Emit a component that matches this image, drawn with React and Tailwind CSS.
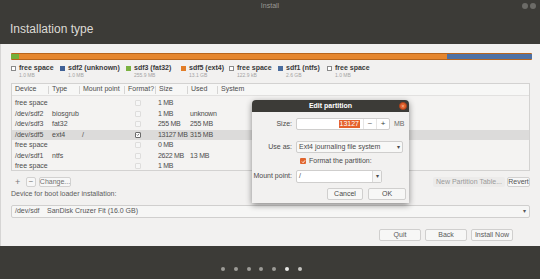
import React from "react";

const legend = [
  { w: "w-[49px]", sw: "free", label: "free space", size: "1.0 MB" },
  { w: "w-[66px]", sw: "bg-[#3f6096]", label: "sdf2 (unknown)", size: "1.0 MB" },
  { w: "w-[55px]", sw: "bg-[#7bb241]", label: "sdf3 (fat32)", size: "255.9 MB" },
  { w: "w-[48px]", sw: "bg-[#e27d27]", label: "sdf5 (ext4)", size: "13.1 GB" },
  { w: "w-[49px]", sw: "free", label: "free space", size: "122.9 kB" },
  { w: "w-[49px]", sw: "bg-[#4a6d9f]", label: "sdf1 (ntfs)", size: "2.6 GB" },
  { w: "w-[49px]", sw: "free", label: "free space", size: "1.0 MB" },
];

const rows = [
  ["free space", "", "", false, "1 MB", ""],
  ["/dev/sdf2", "biosgrub", "", false, "1 MB", "unknown"],
  ["/dev/sdf3", "fat32", "", false, "255 MB", "255 MB"],
  ["/dev/sdf5", "ext4", "/", true, "13127 MB", "315 MB"],
  ["free space", "", "", false, "0 MB", ""],
  ["/dev/sdf1", "ntfs", "", false, "2622 MB", "13 MB"],
  ["free space", "", "", false, "1 MB", ""],
];

const grid = "grid grid-cols-[36px_31px_45px_31px_32px_30px_1fr]";

function Check({ on }) {
  if (on)
    return (
      <span className="w-[6px] h-[6px] ml-[11px] border border-[#6b6b6b] rounded-[1px] bg-white flex items-center justify-center">
        <svg width="5" height="5" viewBox="0 0 10 10">
          <path d="M2 5.2 L4.2 7.4 L8 2.8" stroke="#4a4a4a" strokeWidth="1.8" fill="none" />
        </svg>
      </span>
    );
  return <span className="w-[6px] h-[6px] ml-[11px] border border-[#dedddc] rounded-[1px] bg-[#f6f6f6]" />;
}

export default function App() {
  return (
    <div className="w-[540px] h-[279px] overflow-hidden relative bg-[#3c3b37] font-['Liberation_Sans',Arial,sans-serif]">
      {/* header */}
      <div className="h-[44px] relative">
        <div className="h-[13px] flex items-center justify-center text-[7px] text-[#9a9994]">Install</div>
        <div className="absolute top-[3px] right-[4px] flex gap-[2px]">
          <span className="w-[6px] h-[6px] rounded-full bg-[#6c6b67]" />
          <span className="w-[6px] h-[6px] rounded-full bg-[#6c6b67]" />
        </div>
        <div className="pl-[10px] pt-[8px] text-[12px] leading-[16px] text-[#dcdad5]">Installation type</div>
      </div>

      {/* main panel */}
      <div className="h-[202px] bg-[#f2f1f0] pl-[10px] pr-[10px] pt-[9px] flex flex-col border-l border-[#d6d5d4]">
        {/* partition bar */}
        <div className="flex h-[7px] w-[521px] rounded-[1px] overflow-hidden border-y border-[#b8651c]">
          <div className="w-[8px] bg-[#74b03a]" />
          <div className="w-[428px] bg-[#e5862e]" />
          <div className="flex-1 bg-[#4f71a3]" />
        </div>

        {/* legend */}
        <div className="flex mt-[4px] h-[15px]">
          {legend.map((l, i) => (
            <div key={i} className={`${l.w} flex items-start`}>
              {l.sw === "free" ? (
                <span className="w-[5px] h-[5px] mt-[2px] border border-[#8a8a8a] bg-white shrink-0" />
              ) : (
                <span className={`w-[5px] h-[5px] mt-[2px] ${l.sw} shrink-0`} />
              )}
              <div className="ml-[3px] flex flex-col">
                <span className="text-[7px] leading-[8px] text-[#3a3a3a] font-bold whitespace-nowrap">{l.label}</span>
                <span className="text-[5px] leading-[7px] text-[#a3a3a3] whitespace-nowrap">{l.size}</span>
              </div>
            </div>
          ))}
        </div>

        {/* table */}
        <div className="mt-[4px] h-[88px] border border-[#d3d2d1] bg-[#f4f3f2] text-[7px] text-[#4c4c4c]">
          <div className={`${grid} h-[12px] items-center border-b border-[#e2e1e0] bg-[#f7f7f6]`}>
            {["Device", "Type", "Mount point", "Format?", "Size", "Used", "System"].map((h, i) => (
              <div key={h} className="flex items-center h-full">
                {i > 0 && <span className="w-px h-[8px] bg-[#d6d5d4]" />}
                <span className="pl-[3px] whitespace-nowrap">{h}</span>
              </div>
            ))}
          </div>
          <div className="pt-[2px]">
            {rows.map((r, i) => (
              <div key={i} className={`${grid} h-[10.5px] items-center ${r[3] ? "bg-[#dcdbda]" : ""}`}>
                <span className="pl-[3px] whitespace-nowrap">{r[0]}</span>
                <span className="pl-[4px]">{r[1]}</span>
                <span className="pl-[3px]">{r[2]}</span>
                <span className="flex items-center">
                  <Check on={r[3]} />
                </span>
                <span className="pl-[3px] whitespace-nowrap tracking-[-0.3px]">{r[4]}</span>
                <span className="pl-[3px] whitespace-nowrap tracking-[-0.2px]">{r[5]}</span>
                <span />
              </div>
            ))}
          </div>
        </div>

        {/* +/- change row */}
        <div className="mt-[6px] h-[10px] flex items-center text-[7px] text-[#6f6f6f]">
          <span className="ml-[4px] w-[6px] text-[9px] leading-[10px] text-[#7a7a7a]">+</span>
          <span className="ml-[5px] w-[10px] h-[10px] border border-[#d2d1d0] rounded-[2px] bg-[#f7f7f7] flex items-center justify-center text-[8px] text-[#7a7a7a]">−</span>
          <span className="ml-[3px] w-[32px] h-[10px] border border-[#d2d1d0] rounded-[2px] bg-[#f7f7f7] flex items-center justify-center">Change...</span>
          <span className="ml-auto w-[72px] h-[10px] bg-[#ecebea] rounded-[2px] flex items-center justify-center text-[#9a9a9a] whitespace-nowrap">New Partition Table...</span>
          <span className="ml-[2px] w-[23px] h-[10px] border border-[#d2d1d0] rounded-[2px] bg-[#f7f7f7] flex items-center justify-center text-[#555]">Revert</span>
        </div>

        {/* boot loader */}
        <div className="mt-[3px] h-[8px] text-[7px] leading-[8px] text-[#5c5c5c]">Device for boot loader installation:</div>
        <div className="mt-[7px] h-[13px] border border-[#d0cfce] rounded-[2px] bg-[#f6f6f5] flex items-center text-[7px] text-[#555]">
          <span className="pl-[3px] w-[35px]">/dev/sdf</span>
          <span>SanDisk Cruzer Fit (16.0 GB)</span>
          <span className="ml-auto mr-[3px] text-[6px] text-[#555]">▾</span>
        </div>

        {/* buttons */}
        <div className="mt-[11px] flex justify-end gap-[4px] mr-[17px] text-[7px] text-[#5a5a5a]">
          <span className="w-[42px] h-[12px] border border-[#d0cfce] rounded-[2px] bg-[#f7f7f6] flex items-center justify-center">Quit</span>
          <span className="w-[42px] h-[12px] border border-[#d0cfce] rounded-[2px] bg-[#f7f7f6] flex items-center justify-center">Back</span>
          <span className="w-[42px] h-[12px] border border-[#d0cfce] rounded-[2px] bg-[#f7f7f6] flex items-center justify-center whitespace-nowrap">Install Now</span>
        </div>
      </div>

      {/* bottom dots */}
      <div className="h-[33px] flex items-start pt-[21px] pl-[221px] gap-[8.8px]">
        {[0, 1, 2, 3, 4, 5, 6].map((i) => (
          <span key={i} className={`w-[4px] h-[4px] rounded-full ${i === 5 ? "bg-[#e8e8e6]" : i === 6 ? "bg-[#c4c3c0]" : "bg-[#9c9b97]"}`} />
        ))}
      </div>

      {/* dialog */}
      <div className="absolute left-[252px] top-[100px] w-[157px] h-[103px] rounded-t-[4px] bg-[#f2f1f0] shadow-[0_2px_6px_rgba(0,0,0,0.45)] flex flex-col text-[7px] text-[#4a4a4a]">
        <div className="h-[12px] bg-[#3c3b37] rounded-t-[4px] relative flex items-center justify-center">
          <span className="text-white font-bold text-[7px]">Edit partition</span>
          <span className="absolute right-[2px] top-[2px] w-[8px] h-[8px] rounded-full bg-[#e2622f] border border-[#a8401a] flex items-center justify-center text-[5px] leading-none text-[#f7c5a8]">×</span>
        </div>

        {/* size row */}
        <div className="mt-[6px] flex items-center h-[12px]">
          <span className="w-[43px] text-right pr-[3px]">Size:</span>
          <div className="ml-[1px] w-[94px] h-[12px] border border-[#cfcecd] rounded-[2px] bg-white flex items-center">
            <span className="flex-1 flex justify-end pr-[3px]">
              <span className="bg-[#e5612b] text-white px-[1px] leading-[8px]">13127</span>
            </span>
            <span className="w-[13px] h-full border-l border-[#e6e5e4] flex items-center justify-center text-[8px] text-[#6a6a6a]">−</span>
            <span className="w-[13px] h-full border-l border-[#e6e5e4] flex items-center justify-center text-[8px] text-[#3a3a3a]">+</span>
          </div>
          <span className="ml-[4px] text-[#6a6a6a]">MB</span>
        </div>

        {/* use as */}
        <div className="mt-[11px] flex items-center h-[12px]">
          <span className="w-[43px] text-right pr-[3px]">Use as:</span>
          <div className="ml-[1px] w-[107px] h-[12px] border border-[#cfcecd] rounded-[2px] bg-[#f8f8f7] flex items-center pl-[2px]">
            <span className="whitespace-nowrap">Ext4 journaling file system</span>
            <span className="ml-auto mr-[2px] text-[6px]">▾</span>
          </div>
        </div>

        {/* checkbox */}
        <div className="mt-[4px] flex items-center h-[8px] pl-[48px]">
          <span className="w-[6px] h-[6px] rounded-[1px] bg-[#e0652e] flex items-center justify-center">
            <svg width="5" height="5" viewBox="0 0 10 10">
              <path d="M2 5.2 L4.2 7.4 L8 2.8" stroke="#fff" strokeWidth="1.8" fill="none" />
            </svg>
          </span>
          <span className="ml-[3px]">Format the partition:</span>
        </div>

        {/* mount point */}
        <div className="mt-[5px] flex items-center h-[13px]">
          <span className="w-[43px] text-right pr-[3px] whitespace-nowrap">Mount point:</span>
          <div className="ml-[1px] w-[86px] h-[13px] border border-[#cfcecd] rounded-[2px] bg-white flex items-center">
            <span className="pl-[2px] flex-1">/</span>
            <span className="w-[9px] h-full border-l border-[#dcdbda] bg-[#f6f6f5] flex items-center justify-center text-[6px]">▾</span>
          </div>
        </div>

        {/* buttons */}
        <div className="mt-[5px] flex justify-end gap-[5px] pr-[3px]">
          <span className="w-[36px] h-[12px] border border-[#d0cfce] rounded-[2px] bg-[#f7f7f6] flex items-center justify-center">Cancel</span>
          <span className="w-[38px] h-[12px] border border-[#d0cfce] rounded-[2px] bg-[#f7f7f6] flex items-center justify-center">OK</span>
        </div>
      </div>
    </div>
  );
}
